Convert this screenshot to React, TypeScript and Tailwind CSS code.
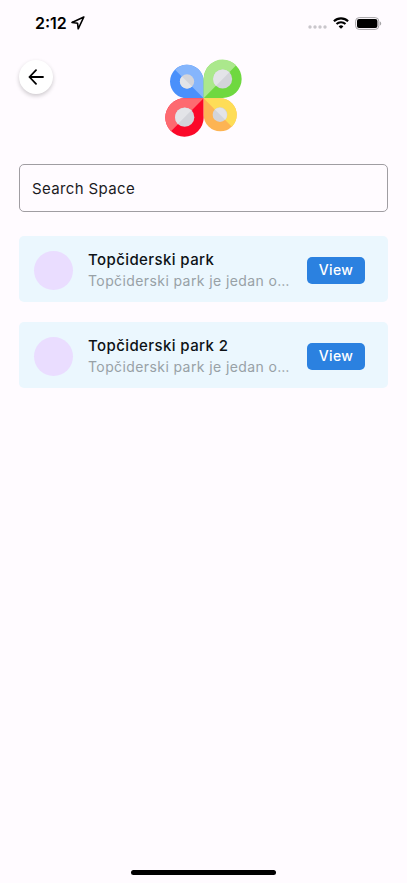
import React, { useState } from 'react';

interface Space {
  id: number;
  name: string;
  description: string;
}

const spaces: Space[] = [
  { id: 1, name: 'Topčiderski park', description: 'Topčiderski park je jedan o…' },
  { id: 2, name: 'Topčiderski park 2', description: 'Topčiderski park je jedan o…' },
];

function StatusBar() {
  return (
    <div className="flex h-[46px] items-center justify-between pl-[35px] pr-[25px] text-black">
      <div className="flex items-center gap-1">
        <span className="text-base font-semibold">2:12</span>
        <svg width="14" height="14" viewBox="0 0 14 14" fill="none" stroke="currentColor" strokeWidth="1.6" strokeLinejoin="round">
          <path d="M12.8 1 1 6.4l5.6.9.6 5.5z" />
        </svg>
      </div>
      <div className="flex items-center gap-[6px]">
        <svg width="19" height="4" viewBox="0 0 19 4" fill="#c9c6cb" className="mt-2">
          <circle cx="2" cy="2" r="1.7" />
          <circle cx="7" cy="2" r="1.7" />
          <circle cx="12" cy="2" r="1.7" />
          <circle cx="17" cy="2" r="1.7" />
        </svg>
        <svg width="16" height="12" viewBox="0 0 16 12" fill="none" stroke="currentColor" strokeWidth="2.1">
          <path d="M.9 4.3a10.2 10.2 0 0 1 14.2 0" />
          <path d="M3.5 7a6.5 6.5 0 0 1 9 0" />
          <path d="M8 11.8 5.6 9.4a3.5 3.5 0 0 1 4.8 0z" fill="currentColor" stroke="none" />
        </svg>
        <svg width="27" height="13" viewBox="0 0 27 13">
          <rect x=".6" y=".6" width="23.2" height="11.8" rx="3.6" fill="none" stroke="#a5a3a6" />
          <rect x="2" y="2" width="20.4" height="9" rx="2" fill="#000" />
          <path d="M24.8 4.4v4.2c.9-.4 1.4-1.2 1.4-2.1s-.5-1.7-1.4-2.1z" fill="#a5a3a6" />
        </svg>
      </div>
    </div>
  );
}

function Logo() {
  return (
    <svg width="78" height="78" viewBox="15 19 234 234" role="img" aria-label="Logo">
      {/* blue petal */}
      <path d="M131 137H81A50.5 50.5 0 1 1 131 86.5z" fill="#4a90fb" />
      <path d="M131 137 45 51A50.5 50.5 0 0 1 131 86.5z" fill="#85b5fc" />
      <circle cx="81" cy="86.5" r="21.5" fill="#d3d4da" />
      <path d="M65.8 71.3a21.5 21.5 0 0 0 30.4 30.4z" fill="#e3e4e8" />
      {/* green petal */}
      <path d="M131 137V78a57 57 0 1 1 57 58z" fill="#6fd840" />
      <path d="M131 137V78a57 57 0 0 1 97.5-40.5z" fill="#abe88c" />
      <circle cx="188" cy="79" r="28.5" fill="#d3d4da" />
      <path d="M167.8 99.2a28.5 28.5 0 0 1 40.4-40.4z" fill="#e3e4e8" />
      {/* red petal */}
      <path d="M131 137v58a57.5 57.5 0 1 1-57.5-58z" fill="#fb0829" />
      <path d="M131 137 33 235.5A57.5 57.5 0 0 1 73.5 137z" fill="#fd6a70" />
      <circle cx="74" cy="193.5" r="29" fill="#d3d4da" />
      <path d="M53.5 214a29 29 0 0 1 41-41z" fill="#e3e4e8" />
      {/* yellow petal */}
      <path d="M131 137v50a49.5 49.5 0 1 0 49.5-50z" fill="#fdb453" />
      <path d="M131 137l84.5 85a49.5 49.5 0 0 0-35-85z" fill="#fedd57" />
      <circle cx="180" cy="186" r="22" fill="#d3d4da" />
      <path d="M164.5 170.5a22 22 0 0 1 31 31z" fill="#e3e4e8" />
    </svg>
  );
}

function SpaceCard({ space }: { space: Space }) {
  return (
    <li className="flex items-center gap-[15px] rounded-[5px] bg-[#ebf7fe] pt-[13px] pb-[11px] pl-[15px] pr-[23px]">
      <div className="size-[39px] shrink-0 rounded-full bg-[#eaddff]"></div>
      <div className="min-w-0 flex-1">
        <h2 className="truncate text-[15px] leading-[22px] font-medium text-[#0d1216]">{space.name}</h2>
        <p className="truncate text-sm leading-5 text-[#98a1a6]">{space.description}</p>
      </div>
      <button type="button" className="h-[27px] w-[58px] shrink-0 rounded-[5px] bg-[#2b81e0] text-sm font-medium tracking-wide text-white">
        View
      </button>
    </li>
  );
}

export default function App() {
  const [query, setQuery] = useState('');
  const visible = spaces.filter(s => s.name.toLowerCase().includes(query.toLowerCase()));

  return (
    <div className="flex min-h-dvh flex-col bg-[#fffbff] font-['Inter',sans-serif]">
      <StatusBar />
      <main className="flex flex-col px-[19px] pt-[13px] tracking-wide">
        <header className="grid grid-cols-[1fr_auto_1fr] items-start">
          <button type="button" aria-label="Back" className="mt-px flex size-[34px] items-center justify-center rounded-full bg-white shadow-[0_2px_4px_rgba(0,0,0,0.2)]">
            <svg width="16" height="16" viewBox="0 0 16 16" fill="none" stroke="#000" strokeWidth="1.8" strokeLinecap="round" strokeLinejoin="round">
              <path d="M15 8H1.5M8 1.2 1.5 8 8 14.8" />
            </svg>
          </button>
          <Logo />
        </header>

        <input
          type="text"
          aria-label="Search Space"
          placeholder="Search Space"
          value={query}
          onChange={e => setQuery(e.target.value)}
          className="mt-[27px] h-12 w-full rounded-[5px] border border-[#a09da2] px-3 text-[15px] tracking-wide text-[#1c1b1f] placeholder:text-[#1c1b1f]"
        />

        <ul className="mt-6 flex flex-col gap-5">
          {visible.map(space => (
            <SpaceCard key={space.id} space={space} />
          ))}
        </ul>
      </main>
      <div className="mx-auto mt-auto mb-2 h-[5px] w-[145px] rounded-full bg-black"></div>
    </div>
  );
}
